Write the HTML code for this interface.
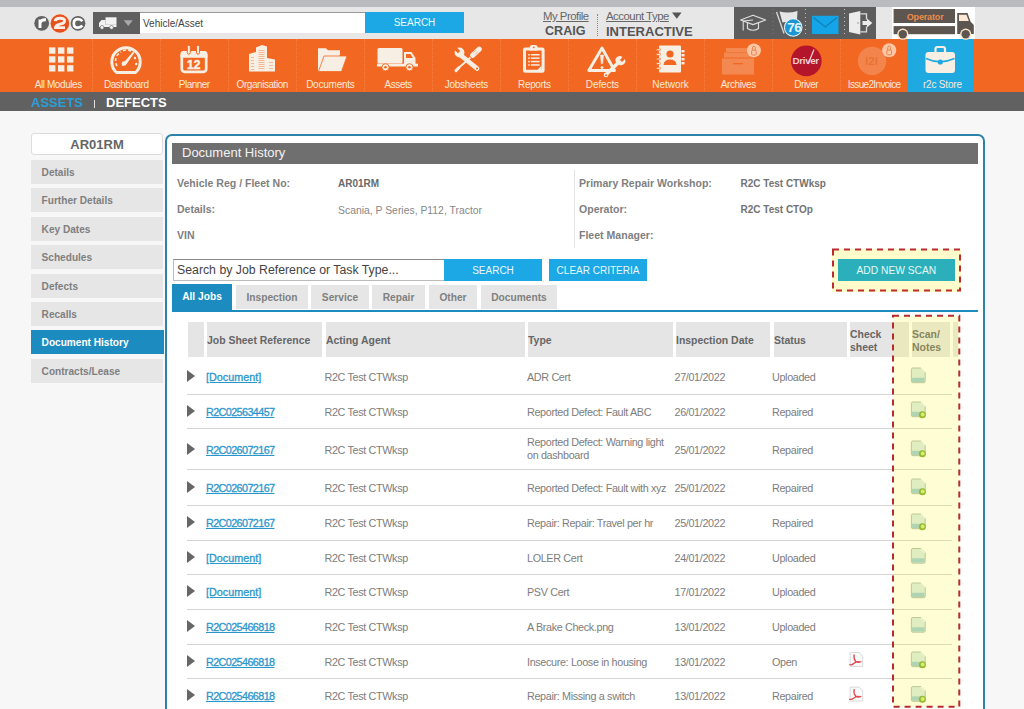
<!DOCTYPE html>
<html><head><meta charset="utf-8">
<style>
*{margin:0;padding:0;box-sizing:border-box}
html,body{width:1024px;height:709px;overflow:hidden;background:#f7f7f7;font-family:"Liberation Sans",sans-serif;position:relative}
.a{position:absolute;white-space:nowrap}
#topbar{left:0;top:0;width:1024px;height:6.6px;background:#babbbe}
#hdr{left:0;top:6.6px;width:1024px;height:32px;background:#e7e7e7}
#nav{left:0;top:38.6px;width:1024px;height:53.4px;background:#f26822}
#sub{left:0;top:92px;width:1024px;height:18.7px;background:#616161}
.navt{top:78.5px;width:68px;height:12px;color:#fbe9d8;font-size:10px;line-height:12px;text-align:center}
.sep{top:39px;width:0;height:52px;border-left:1px dotted rgba(255,200,160,.25)}
.side{left:31px;width:132px;height:24px;background:#e6e6e6;color:#7f7f7f;font-size:10.1px;font-weight:bold;line-height:25.6px;padding-left:10.6px}
.lbl{font-size:10.55px;font-weight:bold;color:#7f7f7f;line-height:12px}
.val{font-size:10.4px;color:#888;line-height:12px}
.valb{font-size:10px;font-weight:bold;color:#6a6a6a;line-height:12px}
.valr{font-size:10px;font-weight:bold;color:#737373;line-height:12px}
.th{top:322px;height:35px;padding-top:1px;background:#e5e5e5;font-size:10.45px;font-weight:bold;color:#666}
.rowline{left:187px;width:765px;height:1px;background:#d4d4d4}
.cell{font-size:10.8px;letter-spacing:-0.35px;color:#7d7d7d;line-height:12px}
.lnk{font-size:10.8px;letter-spacing:-0.6px;color:#2b96cc;-webkit-text-stroke:0.3px #2b96cc;text-decoration:underline;line-height:12px}
.arr{left:187.2px;width:0;height:0;border-left:8px solid #666;border-top:6px solid transparent;border-bottom:6px solid transparent}
.tab{top:284.6px;height:24.6px;background:#e6e6e6;color:#808080;font-size:10.2px;font-weight:bold;line-height:25px;text-align:center}
.btn{background:#1ba8e5;color:#eaf7fd;font-size:10px;line-height:23.5px;text-align:center}
</style></head><body>
<div id="topbar" class="a"></div><div id="hdr" class="a"></div><div id="nav" class="a"></div><div id="sub" class="a"></div>
<div class="a" style="left:93px;top:12px;width:47px;height:22px;background:#5f5f5f"></div>
<div class="a" style="left:140px;top:12px;width:225px;height:20.5px;background:#fff;border-top:1px solid #999;font-size:10px;color:#444;line-height:21px;padding-left:3px">Vehicle/Asset</div>
<div class="a btn" style="left:365px;top:12px;width:99px;height:21px;line-height:22px">SEARCH</div>
<div class="a" style="left:543px;top:10px;font-size:11.4px;letter-spacing:-0.5px;color:#666;text-decoration:underline">My Profile</div>
<div class="a" style="left:545px;top:24.3px;font-size:12.6px;font-weight:bold;color:#555">CRAIG</div>
<div class="a" style="left:597px;top:14px;height:22px;border-left:1px dotted #888"></div>
<div class="a" style="left:606px;top:10px;font-size:11.4px;letter-spacing:-0.5px;color:#666;text-decoration:underline">Account Type</div>
<div class="a" style="left:606px;top:24.3px;font-size:13px;font-weight:bold;color:#555">INTERACTIVE</div>
<div class="a" style="left:734px;top:7px;width:142px;height:32px;background:#5d5d5d"></div>
<div class="a" style="left:892px;top:7px;width:83px;height:32px;background:#fff"></div>
<div class="a" style="left:907px;top:38.6px;width:67px;height:53.4px;background:#1fa9e1"></div>
<svg class="a" style="left:0;top:0" width="1024" height="709" viewBox="0 0 1024 709"><circle cx="41.7" cy="23.3" r="7.4" fill="#626262"/><circle cx="78" cy="23.3" r="7.4" fill="#626262"/><circle cx="59.9" cy="23.5" r="10.4" fill="#f3e3da"/><circle cx="59.9" cy="23.5" r="9.3" fill="#e6501c"/><path d="M40,28 V19.5 M40,23.5 Q40.5,19.5 46,19.8" fill="none" stroke="#fff" stroke-width="2.9"/><path d="M55.2,21.2 Q55.5,18.3 60,18.3 Q64.6,18.3 64.6,21 Q64.6,23.3 60,24.2 Q55.6,25.2 55.5,27.6 H65" fill="none" stroke="#fbeee6" stroke-width="2.9"/><path d="M82.3,21.2 Q81,19.2 78,19.2 Q73.8,19.2 73.8,23.4 Q73.8,27.6 78,27.6 Q81,27.6 82.3,25.6" fill="none" stroke="#fff" stroke-width="2.7"/><rect x="105.5" y="17.3" width="11" height="7.5" fill="#f2f2f2"/><path d="M99,27 V23 L101.5,20 H105.5 V27 Z" fill="#f2f2f2"/><rect x="99" y="24.8" width="17.5" height="2.2" fill="#f2f2f2"/><circle cx="102" cy="27.4" r="1.9" fill="#f2f2f2" stroke="#5f5f5f" stroke-width=".6"/><circle cx="111.5" cy="27.4" r="1.9" fill="#f2f2f2" stroke="#5f5f5f" stroke-width=".6"/><path d="M123.7,20.2 H132.8 L128.25,26.1 Z" fill="#a9a9a9"/><path d="M672,12.6 H681.6 L676.8,18.8 Z" fill="#555"/><line x1="773" y1="9" x2="773" y2="37" stroke="#d8d8d8" stroke-width="1" stroke-dasharray="1 3" opacity="0.25"/><line x1="805.5" y1="9" x2="805.5" y2="37" stroke="#d8d8d8" stroke-width="1" stroke-dasharray="1 3" opacity="0.8"/><line x1="844.5" y1="9" x2="844.5" y2="37" stroke="#d8d8d8" stroke-width="1" stroke-dasharray="1 3" opacity="0.8"/><path d="M740.6,20 L753,15.3 L765.6,20 L753,24.6 Z" fill="none" stroke="#ddd" stroke-width="1.2" stroke-linejoin="round"/><path d="M747.5,22.5 V28.5 Q753,32 758.5,28.5 V22.5" fill="none" stroke="#ddd" stroke-width="1.2"/><path d="M753,20 L743.2,21 V30.5" fill="none" stroke="#ddd" stroke-width="1.1"/><path d="M776.5,12 L784,33.5" stroke="#d8d8d8" stroke-width="1.3"/><path d="M779.5,11.5 Q788,13.8 797.5,11 L797,19 Q790,22 782.5,22.5 Z" fill="#e6e6e6"/><circle cx="793.2" cy="27.5" r="9.3" fill="#e8f8fd"/><circle cx="793.2" cy="27.5" r="8.3" fill="#1d96d3"/><clipPath id="bc"><circle cx="793.2" cy="27.5" r="8.3"/></clipPath><text x="794.2" y="32.4" font-family="Liberation Sans" font-weight="bold" font-size="13.5" fill="#e2f7ff" text-anchor="middle" letter-spacing="-0.6" clip-path="url(#bc)">76</text><rect x="812" y="15.8" width="26.5" height="18.2" fill="#14a5e8"/><path d="M813.5,17.5 L825.25,27 L837,17.5" fill="none" stroke="#0f7fb8" stroke-width="1.1"/><path d="M849,13.5 L860.3,10.9 V34.4 L849,32 Z" fill="#ececec"/><path d="M860.3,13.8 H866.5 V19.5 M866.5,26.5 V31.8 H860.3" fill="none" stroke="#dcdcdc" stroke-width="1.3"/><path d="M862.5,21 H867 V18.5 L872.3,23 L867,27.5 V25 H862.5 Z" fill="#ececec"/><circle cx="858" cy="23" r=".7" fill="#777"/><rect x="893.6" y="9" width="61.4" height="14" fill="#5c5550"/><rect x="893.6" y="26.1" width="61.4" height="8.1" fill="#5c5550"/><path d="M957.2,34 V13 H967.5 L970.5,21.5 L973.8,25 V34 Z" fill="#5c5550"/><path d="M959,14.8 H966.5 L968.8,21 H959 Z" fill="#fbe9d6"/><circle cx="902.8" cy="34.2" r="5.6" fill="#fbe3c8"/><circle cx="902.8" cy="34.2" r="4.2" fill="#5c5550"/><circle cx="965.7" cy="34.2" r="5.6" fill="#fbe3c8"/><circle cx="965.7" cy="34.2" r="4.2" fill="#5c5550"/><text x="925.1" y="20.3" font-family="Liberation Sans" font-weight="bold" font-size="9" fill="#ee8a4a" text-anchor="middle" letter-spacing="-0.15">Operator</text></svg>
<div class="a navt" style="left:24.29px;letter-spacing:-0.427px">All Modules</div>
<div class="a navt" style="left:92.25px;letter-spacing:-0.491px">Dashboard</div>
<div class="a navt" style="left:160.24px;letter-spacing:-0.524px">Planner</div>
<div class="a navt" style="left:228.28px;letter-spacing:-0.442px">Organisation</div>
<div class="a navt" style="left:296.38px;letter-spacing:-0.231px">Documents</div>
<div class="a navt" style="left:364.27px;letter-spacing:-0.453px">Assets</div>
<div class="a navt" style="left:432.36px;letter-spacing:-0.277px">Jobsheets</div>
<div class="a navt" style="left:500.32px;letter-spacing:-0.360px">Reports</div>
<div class="a navt" style="left:568.45px;letter-spacing:-0.101px">Defects</div>
<div class="a navt" style="left:636.49px;letter-spacing:-0.013px">Network</div>
<div class="a navt" style="left:704.30px;letter-spacing:-0.395px">Archives</div>
<div class="a navt" style="left:772.27px;letter-spacing:-0.462px">Driver</div>
<div class="a navt" style="left:840.17px;letter-spacing:-0.658px">Issue2Invoice</div>
<div class="a navt" style="left:908.41px;letter-spacing:-0.176px">r2c Store</div>
<div class="a sep" style="left:92px"></div>
<div class="a sep" style="left:160px"></div>
<div class="a sep" style="left:228px"></div>
<div class="a sep" style="left:296px"></div>
<div class="a sep" style="left:364px"></div>
<div class="a sep" style="left:432px"></div>
<div class="a sep" style="left:500px"></div>
<div class="a sep" style="left:568px"></div>
<div class="a sep" style="left:636px"></div>
<div class="a sep" style="left:704px"></div>
<div class="a sep" style="left:772px"></div>
<div class="a sep" style="left:840px"></div>
<svg class="a" style="left:0;top:0" width="1024" height="709" viewBox="0 0 1024 709"><rect x="49" y="47.4" width="6.4" height="6.3" fill="#f8efe4"/><rect x="58" y="47.4" width="6.4" height="6.3" fill="#f8efe4"/><rect x="67" y="47.4" width="6.4" height="6.3" fill="#f8efe4"/><rect x="49" y="56.3" width="6.4" height="6.3" fill="#f8efe4"/><rect x="58" y="56.3" width="6.4" height="6.3" fill="#f8efe4"/><rect x="67" y="56.3" width="6.4" height="6.3" fill="#f8efe4"/><rect x="49" y="65.2" width="6.4" height="6.3" fill="#f8efe4"/><rect x="58" y="65.2" width="6.4" height="6.3" fill="#f8efe4"/><rect x="67" y="65.2" width="6.4" height="6.3" fill="#f8efe4"/><path d="M116.5,72.5 A14.2,14.2 0 1 1 135.5,72.5 Z" fill="none" stroke="#f8efe4" stroke-width="3" stroke-linejoin="round"/><path d="M117,66 A10,10 0 0 1 121,52" fill="none" stroke="#f8efe4" stroke-width="1.6" stroke-dasharray="3 2.2"/><path d="M123,50.7 A10.5,10.5 0 0 1 131,51" fill="none" stroke="#f8efe4" stroke-width="1.6" stroke-dasharray="3 2.2"/><circle cx="135" cy="58" r="1.2" fill="#f8efe4"/><circle cx="136.2" cy="64" r="1.2" fill="#f8efe4"/><path d="M122.5,65 L133.5,52.5 L126,63.5 Z" fill="#f8efe4" stroke="#f8efe4" stroke-width="1.5" stroke-linejoin="round"/><circle cx="124" cy="63.5" r="2.3" fill="#f8efe4"/><rect x="181.8" y="52.3" width="24.4" height="19.6" rx="3" fill="none" stroke="#f8efe4" stroke-width="2.7"/><path d="M180.5,57.8 V54 Q180.5,51 183.5,51 H204.4 Q207.4,51 207.4,54 V57.8 Z" fill="#f8efe4"/><rect x="187.3" y="45.2" width="3" height="9" rx="1.5" fill="#f8efe4" stroke="#f26822" stroke-width="1"/><rect x="196.5" y="45.2" width="3" height="9" rx="1.5" fill="#f8efe4" stroke="#f26822" stroke-width="1"/><text x="193.7" y="68.7" font-family="Liberation Sans" font-weight="bold" font-size="12" fill="#f8efe4" stroke="#f8efe4" stroke-width="0.5" text-anchor="middle">12</text><path d="M256,71.5 V47.5 L262,45 L267,46.5 V71.5 Z" fill="#f8efe4"/><path d="M249,71.5 V54 L256,52 V71.5 Z" fill="#f8efe4"/><path d="M267,71.5 V58 L275,59.5 V71.5 Z" fill="#f8efe4"/><rect x="258.5" y="50" width="6" height="0.7" fill="#f26822" opacity=".6"/><rect x="258.5" y="52" width="6" height="0.7" fill="#f26822" opacity=".6"/><rect x="258.5" y="54" width="6" height="0.7" fill="#f26822" opacity=".6"/><rect x="258.5" y="56" width="6" height="0.7" fill="#f26822" opacity=".6"/><rect x="258.5" y="58" width="6" height="0.7" fill="#f26822" opacity=".6"/><rect x="258.5" y="60" width="6" height="0.7" fill="#f26822" opacity=".6"/><rect x="258.5" y="62" width="6" height="0.7" fill="#f26822" opacity=".6"/><rect x="258.5" y="64" width="6" height="0.7" fill="#f26822" opacity=".6"/><rect x="258.5" y="66" width="6" height="0.7" fill="#f26822" opacity=".6"/><rect x="258.5" y="68" width="6" height="0.7" fill="#f26822" opacity=".6"/><rect x="251" y="57" width="3" height="0.7" fill="#f26822" opacity=".6"/><rect x="251" y="60" width="3" height="0.7" fill="#f26822" opacity=".6"/><rect x="251" y="63" width="3" height="0.7" fill="#f26822" opacity=".6"/><rect x="251" y="66" width="3" height="0.7" fill="#f26822" opacity=".6"/><rect x="251" y="69" width="3" height="0.7" fill="#f26822" opacity=".6"/><rect x="269" y="62" width="4" height="0.7" fill="#f26822" opacity=".6"/><rect x="269" y="65" width="4" height="0.7" fill="#f26822" opacity=".6"/><rect x="269" y="68" width="4" height="0.7" fill="#f26822" opacity=".6"/><path d="M318,71.5 V48.5 H326 L328,50.5 H340 V55" fill="#f8efe4"/><path d="M318,71.5 V48.5 H326 L328,50.5 H340 V54 H323.5 Z" fill="#f8efe4"/><path d="M318.5,71.5 L324,56 H347 L341.5,71.5 Z" fill="#f8efe4" stroke="#f26822" stroke-width="0.8"/><rect x="377.5" y="48" width="25" height="15.5" rx="1.5" fill="#f8efe4"/><path d="M404,52 H411.5 L415.5,58 V64.5 H404 Z" fill="#f8efe4"/><path d="M406,54 H410.5 L413,58 H406 Z" fill="#f26822"/><rect x="377" y="63.7" width="41" height="2.8" fill="#f8efe4"/><circle cx="385.5" cy="67.3" r="3.6" fill="#f8efe4" stroke="#f26822" stroke-width="0.9"/><circle cx="385.5" cy="67.3" r="1.3" fill="#f26822"/><circle cx="409.5" cy="67.3" r="3.6" fill="#f8efe4" stroke="#f26822" stroke-width="0.9"/><circle cx="409.5" cy="67.3" r="1.3" fill="#f26822"/><path d="M472.8,55.2 L479.3,49.2" stroke="#f8efe4" stroke-width="5.2" stroke-linecap="round"/><path d="M473.2,52.6 L476,50 M475,54.4 L477.8,51.8" stroke="#f0a070" stroke-width=".7"/><path d="M470.5,57.5 L458.5,68" stroke="#f8efe4" stroke-width="1.7"/><path d="M458.8,67.8 L456,70.6" stroke="#f8efe4" stroke-width="3" stroke-linecap="round"/><path d="M461,55.5 L477,68.5" stroke="#f8efe4" stroke-width="4.8" stroke-linecap="round"/><circle cx="459.5" cy="52.5" r="4.9" fill="#f8efe4"/><path d="M460.3,51 L458,53.3 L454.1,49.4 L456.4,47.1 Z" fill="#f26822"/><circle cx="477" cy="68.5" r="1.1" fill="#f26822"/><rect x="524.5" y="49" width="18.6" height="22.3" rx=".8" fill="none" stroke="#f8efe4" stroke-width="3"/><path d="M529.7,50.5 V47.5 Q529.7,45 532,45 H535.5 Q537.7,45 537.7,47.5 V50.5 Z" fill="#f8efe4"/><circle cx="533.7" cy="47.3" r=".9" fill="#f26822"/><rect x="528.2" y="54.0" width="1.6" height="1.5" fill="#f8efe4"/><rect x="530.8" y="54.0" width="8.8" height="1.5" fill="#f8efe4"/><rect x="528.2" y="57.4" width="1.6" height="1.5" fill="#f8efe4"/><rect x="530.8" y="57.4" width="8.8" height="1.5" fill="#f8efe4"/><rect x="528.2" y="60.8" width="1.6" height="1.5" fill="#f8efe4"/><rect x="530.8" y="60.8" width="8.8" height="1.5" fill="#f8efe4"/><rect x="528.2" y="64.2" width="1.6" height="1.5" fill="#f8efe4"/><rect x="530.8" y="64.2" width="8.8" height="1.5" fill="#f8efe4"/><path d="M537.5,70 L541.6,65.5 V70 Z" fill="#f8efe4"/><path d="M602,48 L614.5,70.5 H588.8 Z" fill="none" stroke="#f8efe4" stroke-width="2.9" stroke-linejoin="round"/><path d="M600.5,55 H603.5 L602.7,63.6 H601.3 Z" fill="#f8efe4" stroke="#f8efe4" stroke-width=".6" stroke-linejoin="round"/><circle cx="602" cy="67.6" r="1.45" fill="#f8efe4"/><path d="M606.5,74 L618.5,62.5" stroke="#f8efe4" stroke-width="3.6" stroke-linecap="round"/><path d="M615.5,61.5 A4.4,4.4 0 0 1 622.5,57 L620,60 L622,62 L625,59 A4.4,4.4 0 0 1 619.5,65 Z" fill="#f8efe4"/><circle cx="606" cy="75" r="2.3" fill="#f8efe4"/><circle cx="606" cy="75.2" r="1" fill="#f26822"/><rect x="659" y="45.5" width="22" height="27" rx="1" fill="#f8efe4"/><rect x="656.5" y="49.0" width="4" height="1.6" fill="#f8efe4" stroke="#f26822" stroke-width="0.5"/><rect x="656.5" y="53.6" width="4" height="1.6" fill="#f8efe4" stroke="#f26822" stroke-width="0.5"/><rect x="656.5" y="58.2" width="4" height="1.6" fill="#f8efe4" stroke="#f26822" stroke-width="0.5"/><rect x="656.5" y="62.8" width="4" height="1.6" fill="#f8efe4" stroke="#f26822" stroke-width="0.5"/><rect x="656.5" y="67.4" width="4" height="1.6" fill="#f8efe4" stroke="#f26822" stroke-width="0.5"/><rect x="681.5" y="50" width="3" height="2.4" fill="#f8efe4"/><rect x="681.5" y="54" width="3" height="2.4" fill="#f8efe4"/><rect x="681.5" y="58" width="3" height="2.4" fill="#f8efe4"/><rect x="681.5" y="62" width="3" height="2.4" fill="#f8efe4"/><circle cx="670" cy="54" r="3.6" fill="#f26822"/><path d="M663.5,65 Q664,59.5 670,59.5 Q676,59.5 676.5,65 Z" fill="#f26822"/><g opacity=".24"><rect x="726" y="48" width="24" height="4" fill="#f8efe4"/><rect x="724" y="52.5" width="28" height="5" fill="#f8efe4"/><rect x="722" y="58.5" width="32" height="16" fill="#f8efe4"/><rect x="733" y="63" width="10" height="1.4" fill="#f26822"/></g><circle cx="753.9" cy="50.4" r="7" fill="#fdc6a4"/><rect x="751.6" y="50.2" width="4.6" height="4.8" rx="1" fill="none" stroke="#e8864e" stroke-width="1"/><path d="M752.4,50.2 V47.8 A1.5,1.5 0 0 1 755.4,47.8 V50.2" fill="none" stroke="#e8864e" stroke-width="1"/><circle cx="806.3" cy="60.9" r="15.3" fill="#b5152b"/><text x="805.7" y="64.2" font-family="Liberation Sans" font-weight="bold" font-size="9.8" fill="#f4cdd1" text-anchor="middle" letter-spacing="-0.35">Driver</text><path d="M808.3,63.5 L813.8,50" fill="none" stroke="#f4cdd1" stroke-width="1.3" stroke-linecap="round"/><circle cx="872.1" cy="60.9" r="14.2" fill="#f8efe4" opacity=".22"/><text x="871.5" y="65" font-family="Liberation Sans" font-weight="bold" font-size="11.5" fill="#e2641f" opacity=".55" text-anchor="middle">I2I</text><circle cx="889.2" cy="50.2" r="7" fill="#fdc6a4"/><rect x="886.9" y="50" width="4.6" height="4.8" rx="1" fill="none" stroke="#e8864e" stroke-width="1"/><path d="M887.7,50 V47.6 A1.5,1.5 0 0 1 890.7,47.6 V50" fill="none" stroke="#e8864e" stroke-width="1"/><path d="M935.5,52 V49 A2,2 0 0 1 937.5,47 H943 A2,2 0 0 1 945,49 V52" fill="none" stroke="#f8efe4" stroke-width="2.2"/><rect x="925.5" y="52" width="29.5" height="21" rx="3" fill="#f8efe4"/><path d="M926,58.5 Q940,65 954.5,58.5" fill="none" stroke="#1fa9e1" stroke-width="1.6"/><circle cx="940.3" cy="62" r="2.6" fill="#1fa9e1"/></svg>
<div class="a" style="left:31px;top:94.6px;font-size:13px;font-weight:bold;color:#2a9fd6">ASSETS</div>
<div class="a" style="left:94px;top:99.5px;width:1.3px;height:8.5px;background:#e0e0e0"></div>
<div class="a" style="left:106px;top:94.6px;font-size:13px;font-weight:bold;color:#fff">DEFECTS</div>
<div class="a" style="left:31px;top:133px;width:132px;height:22px;background:#fff;border:1px solid #ddd;border-radius:3px;font-size:13px;font-weight:bold;color:#666;text-align:center;line-height:21.2px">AR01RM</div>
<div class="a side" style="top:160.0px">Details</div>
<div class="a side" style="top:188.4px">Further Details</div>
<div class="a side" style="top:216.8px">Key Dates</div>
<div class="a side" style="top:245.2px">Schedules</div>
<div class="a side" style="top:273.6px">Defects</div>
<div class="a side" style="top:302.0px">Recalls</div>
<div class="a side" style="top:330.4px;width:133px;background:#1b8bc0;color:#fff">Document History</div>
<div class="a side" style="top:358.8px">Contracts/Lease</div>
<div class="a" style="left:165px;top:134px;width:820px;height:600px;background:#fff;border:2px solid #2d82aa;border-radius:7px"></div>
<div class="a" style="left:172px;top:143.3px;width:805.5px;height:20.3px;background:#6f6f6f;color:#f2f2f2;font-size:13px;line-height:20px;padding-left:10px">Document History</div>
<div class="a lbl" style="left:177px;top:177px">Vehicle Reg / Fleet No:</div>
<div class="a valb" style="left:338px;top:178px">AR01RM</div>
<div class="a lbl" style="left:177px;top:203px">Details:</div>
<div class="a val" style="left:338px;top:204.8px">Scania, P Series, P112, Tractor</div>
<div class="a lbl" style="left:177px;top:229px">VIN</div>
<div class="a" style="left:574px;top:170px;width:1px;height:78px;background:#e4e4e4"></div>
<div class="a lbl" style="left:579px;top:177px">Primary Repair Workshop:</div>
<div class="a valr" style="left:740.5px;top:178px">R2C Test CTWksp</div>
<div class="a lbl" style="left:579px;top:203px">Operator:</div>
<div class="a valr" style="left:740.5px;top:204.3px">R2C Test CTOp</div>
<div class="a lbl" style="left:579px;top:229px">Fleet Manager:</div>
<div class="a" style="left:173px;top:259px;width:272px;height:22px;background:#fff;border:1px solid #bbb;border-top-color:#888;font-size:12.3px;color:#444;line-height:20px;padding-left:3px">Search by Job Reference or Task Type...</div>
<div class="a btn" style="left:444px;top:259px;width:98px;height:22px">SEARCH</div>
<div class="a btn" style="left:549px;top:259px;width:98px;height:22px">CLEAR CRITERIA</div>
<div class="a" style="left:832px;top:248.5px;width:129px;height:43px;background:#fffccc"></div>
<svg class="a" style="left:0;top:0" width="1024" height="709" viewBox="0 0 1024 709"><rect x="833" y="249.5" width="127" height="41" fill="none" stroke="#bb2a2e" stroke-width="2" stroke-dasharray="6 5"/></svg>
<div class="a btn" style="left:838.2px;top:259px;width:116.4px;height:22px;background:#2bb0bb;color:#e6f7f7;font-size:10.25px;line-height:23.5px">ADD NEW SCAN</div>
<div class="a tab" style="left:172px;width:60px;background:#1b8bc0;color:#fff;top:284.3px;height:27px;line-height:25.5px">All Jobs</div>
<div class="a tab" style="left:236px;width:72px">Inspection</div>
<div class="a tab" style="left:311px;width:58px">Service</div>
<div class="a tab" style="left:372px;width:53px">Repair</div>
<div class="a tab" style="left:429px;width:48px">Other</div>
<div class="a tab" style="left:481px;width:76px">Documents</div>
<div class="a" style="left:172px;top:310px;width:806px;height:2px;background:#1b8bc0"></div>
<div class="a th" style="left:188px;width:16px"></div>
<div class="a th" style="left:207px;width:115px;line-height:35px">Job Sheet Reference</div>
<div class="a th" style="left:326px;width:199px;line-height:35px">Acting Agent</div>
<div class="a th" style="left:528px;width:145px;line-height:35px">Type</div>
<div class="a th" style="left:676px;width:94px;line-height:35px">Inspection Date</div>
<div class="a th" style="left:774px;width:73px;line-height:35px">Status</div>
<div class="a th" style="left:850px;width:59px;line-height:13px;padding-top:6px">Check<br>sheet</div>
<div class="a th" style="left:912px;width:38px;line-height:13px;padding-top:6px">Scan/<br>Notes</div>
<div class="a th" style="left:953px;width:5px"></div>
<div class="a arr" style="top:370px"></div>
<div class="a lnk" style="left:206px;top:371px;letter-spacing:0">[Document]</div>
<div class="a cell" style="left:324.5px;top:371px">R2C Test CTWksp</div>
<div class="a cell" style="left:527px;top:371px">ADR Cert</div>
<div class="a cell" style="left:674.5px;top:371px">27/01/2022</div>
<div class="a cell" style="left:772px;top:371px">Uploaded</div>
<div class="a arr" style="top:405px"></div>
<div class="a lnk" style="left:206px;top:406px">R2C025634457</div>
<div class="a cell" style="left:324.5px;top:406px">R2C Test CTWksp</div>
<div class="a cell" style="left:527px;top:406px">Reported Defect: Fault ABC</div>
<div class="a cell" style="left:674.5px;top:406px">26/01/2022</div>
<div class="a cell" style="left:772px;top:406px">Repaired</div>
<div class="a arr" style="top:443px"></div>
<div class="a lnk" style="left:206px;top:444px">R2C026072167</div>
<div class="a cell" style="left:324.5px;top:444px">R2C Test CTWksp</div>
<div class="a cell" style="left:527px;top:436px;line-height:13px">Reported Defect: Warning light<br>on dashboard</div>
<div class="a cell" style="left:674.5px;top:444px">25/01/2022</div>
<div class="a cell" style="left:772px;top:444px">Repaired</div>
<div class="a arr" style="top:481px"></div>
<div class="a lnk" style="left:206px;top:482px">R2C026072167</div>
<div class="a cell" style="left:324.5px;top:482px">R2C Test CTWksp</div>
<div class="a cell" style="left:527px;top:482px">Reported Defect: Fault with xyz</div>
<div class="a cell" style="left:674.5px;top:482px">25/01/2022</div>
<div class="a cell" style="left:772px;top:482px">Repaired</div>
<div class="a arr" style="top:516px"></div>
<div class="a lnk" style="left:206px;top:517px">R2C026072167</div>
<div class="a cell" style="left:324.5px;top:517px">R2C Test CTWksp</div>
<div class="a cell" style="left:527px;top:517px">Repair: Repair: Travel per hr</div>
<div class="a cell" style="left:674.5px;top:517px">25/01/2022</div>
<div class="a cell" style="left:772px;top:517px">Repaired</div>
<div class="a arr" style="top:551px"></div>
<div class="a lnk" style="left:206px;top:552px;letter-spacing:0">[Document]</div>
<div class="a cell" style="left:324.5px;top:552px">R2C Test CTWksp</div>
<div class="a cell" style="left:527px;top:552px">LOLER Cert</div>
<div class="a cell" style="left:674.5px;top:552px">24/01/2022</div>
<div class="a cell" style="left:772px;top:552px">Uploaded</div>
<div class="a arr" style="top:585px"></div>
<div class="a lnk" style="left:206px;top:586px;letter-spacing:0">[Document]</div>
<div class="a cell" style="left:324.5px;top:586px">R2C Test CTWksp</div>
<div class="a cell" style="left:527px;top:586px">PSV Cert</div>
<div class="a cell" style="left:674.5px;top:586px">17/01/2022</div>
<div class="a cell" style="left:772px;top:586px">Uploaded</div>
<div class="a arr" style="top:620px"></div>
<div class="a lnk" style="left:206px;top:621px">R2C025466818</div>
<div class="a cell" style="left:324.5px;top:621px">R2C Test CTWksp</div>
<div class="a cell" style="left:527px;top:621px">A Brake Check.png</div>
<div class="a cell" style="left:674.5px;top:621px">13/01/2022</div>
<div class="a cell" style="left:772px;top:621px">Uploaded</div>
<div class="a arr" style="top:655px"></div>
<div class="a lnk" style="left:206px;top:656px">R2C025466818</div>
<div class="a cell" style="left:324.5px;top:656px">R2C Test CTWksp</div>
<div class="a cell" style="left:527px;top:656px">Insecure: Loose in housing</div>
<div class="a cell" style="left:674.5px;top:656px">13/01/2022</div>
<div class="a cell" style="left:772px;top:656px">Open</div>
<div class="a arr" style="top:689px"></div>
<div class="a lnk" style="left:206px;top:690px">R2C025466818</div>
<div class="a cell" style="left:324.5px;top:690px">R2C Test CTWksp</div>
<div class="a cell" style="left:527px;top:690px">Repair: Missing a switch</div>
<div class="a cell" style="left:674.5px;top:690px">13/01/2022</div>
<div class="a cell" style="left:772px;top:690px">Repaired</div>
<div class="a rowline" style="top:394px"></div>
<div class="a rowline" style="top:428px"></div>
<div class="a rowline" style="top:469px"></div>
<div class="a rowline" style="top:505px"></div>
<div class="a rowline" style="top:540px"></div>
<div class="a rowline" style="top:574px"></div>
<div class="a rowline" style="top:608.6px"></div>
<div class="a rowline" style="top:643.5px"></div>
<div class="a rowline" style="top:678px"></div>
<svg class="a" style="left:0;top:0" width="1024" height="709" viewBox="0 0 1024 709"><path d="M912.9,368 H920.9 L925.1999999999999,372.3 V381.2 Q925.1999999999999,382.7 923.6999999999999,382.7 H912.9 Q911.4,382.7 911.4,381.2 V369.5 Q911.4,368 912.9,368 Z" fill="#d6ebe6" stroke="#a6b6a4" stroke-width=".9"/><rect x="912.1" y="377.8" width="12.4" height="4.2" fill="#98cbd2"/><path d="M920.9,368.4 L924.8,372.3" stroke="#eef8f4" stroke-width="1.2"/><path d="M912.9,402 H920.9 L925.1999999999999,406.3 V415.2 Q925.1999999999999,416.7 923.6999999999999,416.7 H912.9 Q911.4,416.7 911.4,415.2 V403.5 Q911.4,402 912.9,402 Z" fill="#d6ebe6" stroke="#a6b6a4" stroke-width=".9"/><rect x="912.1" y="411.8" width="12.4" height="4.2" fill="#98cbd2"/><path d="M920.9,402.4 L924.8,406.3" stroke="#eef8f4" stroke-width="1.2"/><circle cx="922.4" cy="414.7" r="3.5" fill="#78a82c"/><circle cx="922.6999999999999" cy="414.4" r="2" fill="#cdea80"/><path d="M912.9,441 H920.9 L925.1999999999999,445.3 V454.2 Q925.1999999999999,455.7 923.6999999999999,455.7 H912.9 Q911.4,455.7 911.4,454.2 V442.5 Q911.4,441 912.9,441 Z" fill="#d6ebe6" stroke="#a6b6a4" stroke-width=".9"/><rect x="912.1" y="450.8" width="12.4" height="4.2" fill="#98cbd2"/><path d="M920.9,441.4 L924.8,445.3" stroke="#eef8f4" stroke-width="1.2"/><circle cx="922.4" cy="453.7" r="3.5" fill="#78a82c"/><circle cx="922.6999999999999" cy="453.4" r="2" fill="#cdea80"/><path d="M912.9,479 H920.9 L925.1999999999999,483.3 V492.2 Q925.1999999999999,493.7 923.6999999999999,493.7 H912.9 Q911.4,493.7 911.4,492.2 V480.5 Q911.4,479 912.9,479 Z" fill="#d6ebe6" stroke="#a6b6a4" stroke-width=".9"/><rect x="912.1" y="488.8" width="12.4" height="4.2" fill="#98cbd2"/><path d="M920.9,479.4 L924.8,483.3" stroke="#eef8f4" stroke-width="1.2"/><circle cx="922.4" cy="491.7" r="3.5" fill="#78a82c"/><circle cx="922.6999999999999" cy="491.4" r="2" fill="#cdea80"/><path d="M912.9,514 H920.9 L925.1999999999999,518.3 V527.2 Q925.1999999999999,528.7 923.6999999999999,528.7 H912.9 Q911.4,528.7 911.4,527.2 V515.5 Q911.4,514 912.9,514 Z" fill="#d6ebe6" stroke="#a6b6a4" stroke-width=".9"/><rect x="912.1" y="523.8" width="12.4" height="4.2" fill="#98cbd2"/><path d="M920.9,514.4 L924.8,518.3" stroke="#eef8f4" stroke-width="1.2"/><circle cx="922.4" cy="526.7" r="3.5" fill="#78a82c"/><circle cx="922.6999999999999" cy="526.4" r="2" fill="#cdea80"/><path d="M912.9,548.5 H920.9 L925.1999999999999,552.8 V561.7 Q925.1999999999999,563.2 923.6999999999999,563.2 H912.9 Q911.4,563.2 911.4,561.7 V550.0 Q911.4,548.5 912.9,548.5 Z" fill="#d6ebe6" stroke="#a6b6a4" stroke-width=".9"/><rect x="912.1" y="558.3" width="12.4" height="4.2" fill="#98cbd2"/><path d="M920.9,548.9 L924.8,552.8" stroke="#eef8f4" stroke-width="1.2"/><path d="M912.9,583 H920.9 L925.1999999999999,587.3 V596.2 Q925.1999999999999,597.7 923.6999999999999,597.7 H912.9 Q911.4,597.7 911.4,596.2 V584.5 Q911.4,583 912.9,583 Z" fill="#d6ebe6" stroke="#a6b6a4" stroke-width=".9"/><rect x="912.1" y="592.8" width="12.4" height="4.2" fill="#98cbd2"/><path d="M920.9,583.4 L924.8,587.3" stroke="#eef8f4" stroke-width="1.2"/><path d="M912.9,617.5 H920.9 L925.1999999999999,621.8 V630.7 Q925.1999999999999,632.2 923.6999999999999,632.2 H912.9 Q911.4,632.2 911.4,630.7 V619.0 Q911.4,617.5 912.9,617.5 Z" fill="#d6ebe6" stroke="#a6b6a4" stroke-width=".9"/><rect x="912.1" y="627.3" width="12.4" height="4.2" fill="#98cbd2"/><path d="M920.9,617.9 L924.8,621.8" stroke="#eef8f4" stroke-width="1.2"/><path d="M912.9,652 H920.9 L925.1999999999999,656.3 V665.2 Q925.1999999999999,666.7 923.6999999999999,666.7 H912.9 Q911.4,666.7 911.4,665.2 V653.5 Q911.4,652 912.9,652 Z" fill="#d6ebe6" stroke="#a6b6a4" stroke-width=".9"/><rect x="912.1" y="661.8" width="12.4" height="4.2" fill="#98cbd2"/><path d="M920.9,652.4 L924.8,656.3" stroke="#eef8f4" stroke-width="1.2"/><circle cx="922.4" cy="664.7" r="3.5" fill="#78a82c"/><circle cx="922.6999999999999" cy="664.4" r="2" fill="#cdea80"/><path d="M850.2,652.5 H859.2 L862.7,656.0 V666.5 H850.2 Z" fill="#fafafa" stroke="#d0d0d0" stroke-width=".8"/><path d="M854.2,654.5 Q853.2,658.5 855.7,661.5 Q858.2,663.0 860.2,662.0 Q856.2,661.0 853.7,663.5 Q851.7,665.5 849.2,664.5" fill="none" stroke="#e0484e" stroke-width="1.3"/><path d="M912.9,686.6 H920.9 L925.1999999999999,690.9 V699.8000000000001 Q925.1999999999999,701.3000000000001 923.6999999999999,701.3000000000001 H912.9 Q911.4,701.3000000000001 911.4,699.8000000000001 V688.1 Q911.4,686.6 912.9,686.6 Z" fill="#d6ebe6" stroke="#a6b6a4" stroke-width=".9"/><rect x="912.1" y="696.4" width="12.4" height="4.2" fill="#98cbd2"/><path d="M920.9,687.0 L924.8,690.9" stroke="#eef8f4" stroke-width="1.2"/><circle cx="922.4" cy="699.3000000000001" r="3.5" fill="#78a82c"/><circle cx="922.6999999999999" cy="699.0" r="2" fill="#cdea80"/><path d="M850.2,687.1 H859.2 L862.7,690.6 V701.1 H850.2 Z" fill="#fafafa" stroke="#d0d0d0" stroke-width=".8"/><path d="M854.2,689.1 Q853.2,693.1 855.7,696.1 Q858.2,697.6 860.2,696.6 Q856.2,695.6 853.7,698.1 Q851.7,700.1 849.2,699.1" fill="none" stroke="#e0484e" stroke-width="1.3"/></svg>
<div class="a" style="left:893px;top:316px;width:66px;height:391px;background:rgba(255,248,60,.22)"></div>
<svg class="a" style="left:0;top:0" width="1024" height="709" viewBox="0 0 1024 709"><rect x="893" y="315.8" width="66.3" height="391" fill="none" stroke="#b72a2e" stroke-width="2" stroke-dasharray="6 5"/></svg>
</body></html>
